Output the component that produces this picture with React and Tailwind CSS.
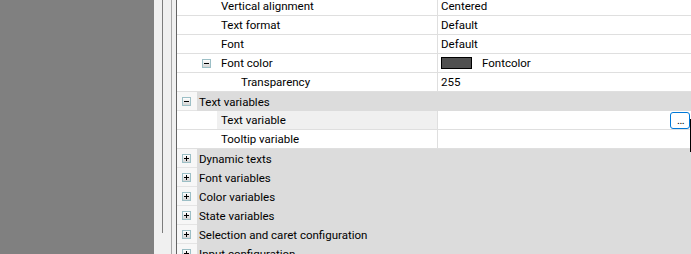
import React from "react"

const rows = [
  { type: "prop", depth: 1, label: "Vertical alignment", value: "Centered" },
  { type: "prop", depth: 1, label: "Text format", value: "Default" },
  { type: "prop", depth: 1, label: "Font", value: "Default" },
  { type: "prop", depth: 1, label: "Font color", value: "Fontcolor", swatch: true, expander: "minus" },
  { type: "prop", depth: 2, label: "Transparency", value: "255" },
  { type: "cat", label: "Text variables", expander: "minus" },
  { type: "prop", depth: 1, label: "Text variable", value: "", selected: true, button: true },
  { type: "prop", depth: 1, label: "Tooltip variable", value: "" },
  { type: "cat", label: "Dynamic texts", expander: "plus" },
  { type: "cat", label: "Font variables", expander: "plus" },
  { type: "cat", label: "Color variables", expander: "plus" },
  { type: "cat", label: "State variables", expander: "plus" },
  { type: "cat", label: "Selection and caret configuration", expander: "plus" },
  { type: "cat", label: "Input configuration", expander: "plus" },
]

const Expander = ({ kind }) => {
  return (
    <div className="relative w-[9px] h-[9px] border border-[#9cbfc6] bg-gradient-to-b from-white to-[#d4d4d4]">
      <div className="absolute left-[1px] top-[3px] w-[5px] h-[1px] bg-black"></div>
      {kind === "plus" ? <div className="absolute left-[3px] top-[1px] w-[1px] h-[5px] bg-black"></div> : null}
    </div>
  )
}

const Row = ({ row }) => {
  if (row.type === "cat") {
    return (
      <div className="flex h-[19px] shrink-0">
        <div className="w-[20px] h-full bg-[#f7f7f7] border-b border-[#e4e4e4] flex items-center pl-[5px]">
          <Expander kind={row.expander} />
        </div>
        <div className="flex-1 h-full bg-[#dcdcdc] pl-[2px] pt-[1px] leading-[18px] whitespace-nowrap">{row.label}</div>
      </div>
    )
  }
  return (
    <div className="flex h-[19px] shrink-0 border-b border-[#dfdfdf] bg-white">
      <div className="flex w-[261px] h-full border-r border-[#dfdfdf]">
        <div className={row.depth === 2 ? "w-[60px] h-full" : "w-[40px] h-full flex items-center pl-[25px]"}>
          {row.expander ? <Expander kind={row.expander} /> : null}
        </div>
        <div className={`flex-1 h-full pl-[4px] pt-[1px] leading-[17px] ${row.selected ? "bg-[#f0f0f0]" : ""}`}>{row.label}</div>
      </div>
      <div className="relative flex-1 h-full flex items-center pl-[3px]">
        {row.swatch ? <div className="w-[31px] h-[12px] bg-[#505050] border border-black mr-[10px]"></div> : null}
        <span className="pt-[1px] leading-[17px]">{row.value}</span>
        {row.button ?
          <div className="absolute right-[1px] top-[1px] w-[20px] h-[17px] border border-[#0078d7] rounded-[3px] bg-white">
            <span className="absolute left-[6px] top-[1px] text-[11px] leading-[14px] tracking-[-0.5px]">...</span>
          </div> : null}
      </div>
    </div>
  )
}

const App = () => {
  return (
    <div className="relative flex w-[691px] h-[254px] overflow-hidden bg-white text-[11.5px] text-black" style={{ fontFamily: 'Roboto, "Noto Sans", sans-serif' }}>
      <div className="w-[154px] h-full bg-[#808080]"></div>
      <div className="flex w-[23px] h-full bg-[#f0f0f0]">
        <div className="w-[8px]"></div>
        <div className="w-[1px] h-[233px] bg-[#7c7c7c]"></div>
        <div className="w-[8px]"></div>
        <div className="w-[1px] h-full bg-[#a8a8a8]"></div>
        <div className="w-[4px]"></div>
        <div className="w-[1px] h-full bg-[#646464]"></div>
      </div>
      <div className="flex-1 flex flex-col mt-[-3px]">
        {rows.map((row, i) => <Row row={row} key={i} />)}
      </div>
      <div className="absolute left-[690px] top-[119px] w-[1px] h-[33px] bg-black"></div>
    </div>
  )
}

export default App
